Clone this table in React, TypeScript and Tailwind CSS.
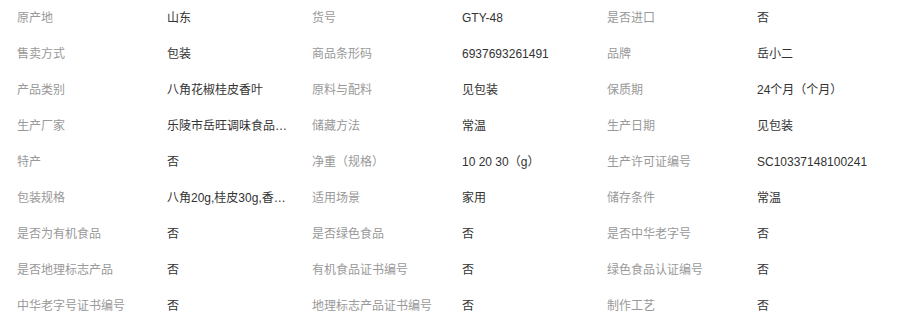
import React from "react";

const rows: [string, string][][] = [
  [["原产地", "山东"], ["货号", "GTY-48"], ["是否进口", "否"]],
  [["售卖方式", "包装"], ["商品条形码", "6937693261491"], ["品牌", "岳小二"]],
  [["产品类别", "八角花椒桂皮香叶"], ["原料与配料", "见包装"], ["保质期", "24个月（个月）"]],
  [["生产厂家", "乐陵市岳旺调味食品有限公司"], ["储藏方法", "常温"], ["生产日期", "见包装"]],
  [["特产", "否"], ["净重（规格）", "10 20 30（g）"], ["生产许可证编号", "SC10337148100241"]],
  [["包装规格", "八角20g,桂皮30g,香叶10g"], ["适用场景", "家用"], ["储存条件", "常温"]],
  [["是否为有机食品", "否"], ["是否绿色食品", "否"], ["是否中华老字号", "否"]],
  [["是否地理标志产品", "否"], ["有机食品证书编号", "否"], ["绿色食品认证编号", "否"]],
  [["中华老字号证书编号", "否"], ["地理标志产品证书编号", "否"], ["制作工艺", "否"]],
];

export default function App() {
  return (
    <div
      className="w-[905px] h-[332px] bg-white pl-[17px] text-[12px] overflow-hidden"
      style={{ fontFamily: '"Liberation Sans", "Noto Sans CJK SC", sans-serif' }}
    >
      <div className="flex flex-col">
        {rows.map((row, i) => (
          <div key={i} className="flex h-[36px] items-center">
            {row.map(([label, value], j) => (
              <div key={j} className={`flex items-center ${j === 2 ? "w-[290px]" : "w-[295px]"}`}>
                <div className="w-[150px] shrink-0 text-[#999999] whitespace-nowrap">{label}</div>
                <div className="max-w-[124px] truncate text-[#333333]">{value}</div>
              </div>
            ))}
          </div>
        ))}
      </div>
    </div>
  );
}
